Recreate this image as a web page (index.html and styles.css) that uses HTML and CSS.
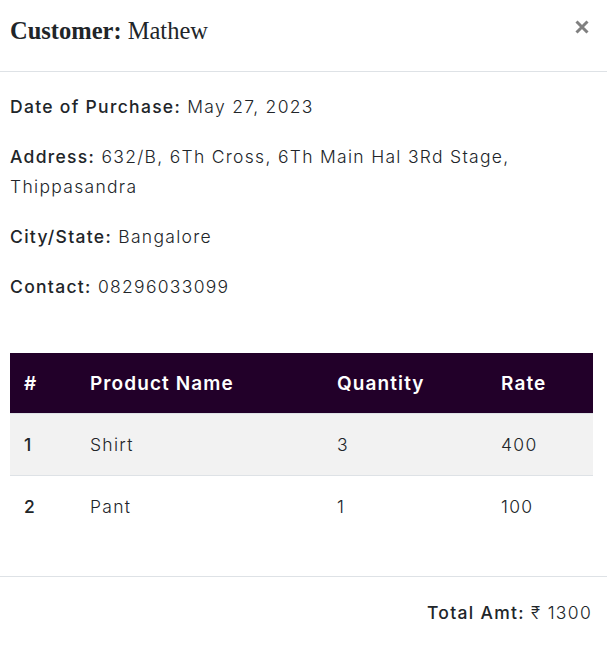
FILE: index.html
```html
<!DOCTYPE html>
<html lang="en">
<head>
<meta charset="utf-8">
<title>Customer</title>
<link rel="stylesheet" href="styles.css">
</head>
<body>
<div class="modal">
  <div class="modal-header">
    <h4 class="modal-title"><b>Customer:</b> Mathew</h4>
    <button class="close" type="button" aria-label="Close">
      <svg width="14" height="14" viewBox="0 0 14 14"><path d="M1.5 1.5 L12.5 12.5 M12.5 1.5 L1.5 12.5" stroke="#808080" stroke-width="3" stroke-linecap="butt"/></svg>
    </button>
  </div>
  <div class="modal-body">
    <p><span class="label">Date of Purchase:</span> May 27, 2023</p>
    <p><span class="label">Address:</span> 632/B, 6Th Cross, 6Th Main Hal 3Rd Stage, Thippasandra</p>
    <p><span class="label">City/State:</span> Bangalore</p>
    <p><span class="label">Contact:</span> 08296033099</p>
    <table class="items">
      <thead>
        <tr><th class="c-no">#</th><th class="c-name">Product Name</th><th class="c-qty">Quantity</th><th>Rate</th></tr>
      </thead>
      <tbody>
        <tr class="odd"><td class="num">1</td><td>Shirt</td><td>3</td><td>400</td></tr>
        <tr><td class="num">2</td><td>Pant</td><td>1</td><td>100</td></tr>
      </tbody>
    </table>
  </div>
  <div class="modal-footer">
    <span class="label">Total Amt:</span>&nbsp;₹ 1300
  </div>
</div>
</body>
</html>
```
FILE: styles.css
```css
html, body {
  margin: 0;
  padding: 0;
  background: #fff;
}
body {
  font-family: "Inter", "Noto Sans", sans-serif;
  color: #212529;
}
.modal {
  width: 607px;
}
.modal-header {
  display: flex;
  justify-content: space-between;
  align-items: flex-start;
  height: 71px;
  border-bottom: 1px solid #dee2e6;
  padding: 0 10px;
  box-sizing: content-box;
}
.modal-title {
  margin: 14px 0 0;
  font-family: "Liberation Serif", "Times New Roman", serif;
  font-size: 24.5px;
  font-weight: normal;
  line-height: 33px;
  color: #212529;
}
.modal-title b {
  font-weight: bold;
}
.close {
  border: 0;
  background: none;
  padding: 0;
  margin: 20px 8px 0 0;
  width: 14px;
  height: 14px;
  display: flex;
}
.modal-body {
  padding: 20px 10px 39px 10px;
}
.modal-body p {
  margin: 0 0 20px;
  font-size: 17.5px;
  line-height: 30px;
  font-weight: 300;
  color: #212529;
  letter-spacing: 1.3px;
}
.label {
  font-weight: 500;
}
.items {
  margin-top: 51px;
  width: 583px;
  border-collapse: collapse;
  font-size: 17.5px;
  letter-spacing: 1.3px;
}
.items th {
  background: #220029;
  color: #fff;
  font-weight: 600;
  font-size: 19px;
  text-align: left;
  height: 60px;
  padding: 0 14px;
  letter-spacing: 1.1px;
}
.items td {
  height: 61px;
  padding: 0 14px;
  font-weight: 300;
  color: #212529;
  border-top: 1px solid #dee2e6;
}
.items tr.odd td {
  background: #f2f2f2;
}
.items td.num {
  font-weight: 500;
}
.c-no { width: 38px; }
.c-name { width: 219px; }
.c-qty { width: 136px; }
.modal-footer {
  border-top: 1px solid #dee2e6;
  height: 71px;
  display: flex;
  align-items: center;
  justify-content: flex-end;
  padding: 0 15px 0 10px;
  font-size: 17.5px;
  font-weight: 300;
  letter-spacing: 1.3px;
  color: #212529;
}
.modal-footer .label {
  font-weight: 500;
}
```
